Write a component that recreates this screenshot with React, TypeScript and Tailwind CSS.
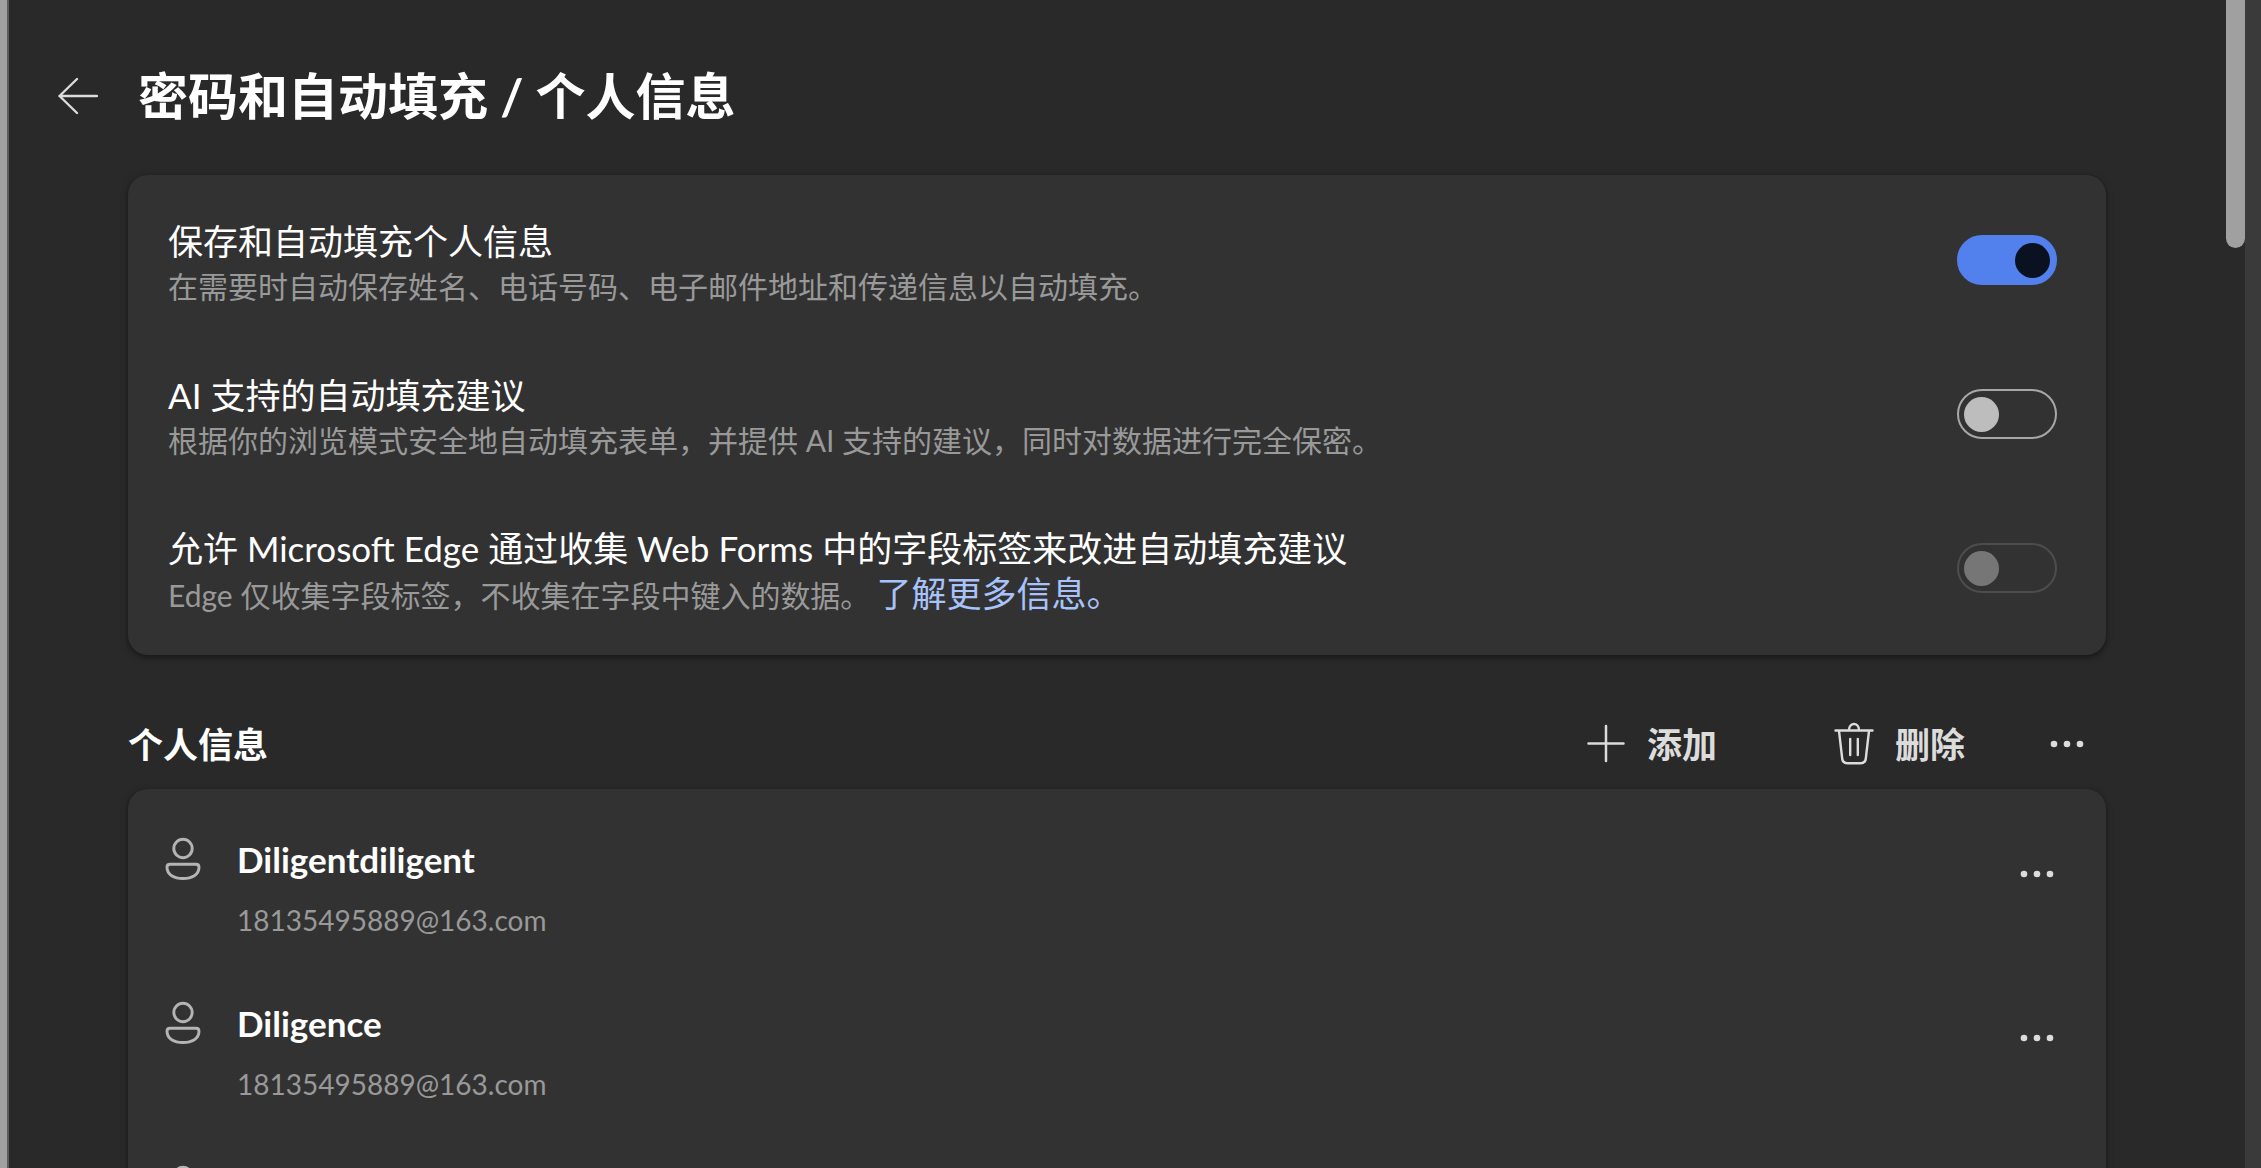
import React, { useState } from 'react';

interface Setting {
  id: string;
  title: string;
  description: string;
  link?: string;
  enabled: boolean;
  disabled?: boolean;
}

interface Profile {
  id: number;
  name: string;
  email: string;
}

const SETTINGS: Setting[] = [
  {
    id: 'save-info',
    title: '保存和自动填充个人信息',
    description: '在需要时自动保存姓名、电话号码、电子邮件地址和传递信息以自动填充。',
    enabled: true,
  },
  {
    id: 'ai-suggestions',
    title: 'AI 支持的自动填充建议',
    description: '根据你的浏览模式安全地自动填充表单，并提供 AI 支持的建议，同时对数据进行完全保密。',
    enabled: false,
  },
  {
    id: 'field-labels',
    title: '允许 Microsoft Edge 通过收集 Web Forms 中的字段标签来改进自动填充建议',
    description: 'Edge 仅收集字段标签，不收集在字段中键入的数据。',
    link: '了解更多信息。',
    enabled: false,
    disabled: true,
  },
];

const PROFILES: Profile[] = [
  { id: 1, name: 'Diligentdiligent', email: '18135495889@163.com' },
  { id: 2, name: 'Diligence', email: '18135495889@163.com' },
  { id: 3, name: '', email: '' },
];

const BackIcon = () => (
  <svg className="h-10 w-10" viewBox="0 0 40 40" fill="none" stroke="#dcdcdc" strokeWidth="2.4" strokeLinecap="round" strokeLinejoin="round">
    <path d="M39 20H1.5M19 3 1.5 20 19 37" />
  </svg>
);

const PlusIcon = () => (
  <svg className="h-10 w-10" viewBox="0 0 40 40" fill="none" stroke="#dcdcdc" strokeWidth="2.5" strokeLinecap="round">
    <path d="M20 2v35M2.500 19.500h35" />
  </svg>
);

const TrashIcon = () => (
  <svg className="h-11 w-10" viewBox="0 0 40 44" fill="none" stroke="#dcdcdc" strokeWidth="2.4" strokeLinecap="round" strokeLinejoin="round">
    <path d="M1.5 8.500h37M15 8c0-8 10-8 10 0M5 9l3.2 27.500q.6 4.800 5.400 4.800h12.800q4.800 0 5.400-4.800L35 9M16.200 17v16M23.800 17v16" />
  </svg>
);

const MoreIcon = () => (
  <svg className="h-10 w-10" viewBox="0 0 40 40" fill="#dcdcdc">
    <circle cx="7" cy="20" r="3.3" />
    <circle cx="20" cy="20" r="3.3" />
    <circle cx="33" cy="20" r="3.3" />
  </svg>
);

const PersonIcon = () => (
  <svg className="h-11 w-9" viewBox="0 0 36 44" fill="none" stroke="#b4b4b4" strokeWidth="2.9">
    <circle cx="18" cy="11.500" r="9.200" />
    <path d="M5 27.300h26q3 0 3 3c0 7.500-7 11.200-16 11.200S2 37.800 2 30.300q0-3 3-3Z" />
  </svg>
);

const Toggle: React.FC<{ setting: Setting; checked: boolean; onChange: (checked: boolean) => void }> = ({ setting, checked, onChange }) => {
  return (
    <input
      id={setting.id}
      type="checkbox"
      role="switch"
      checked={checked}
      disabled={setting.disabled}
      onChange={(e) => onChange(e.target.checked)}
      className="flex h-[50px] w-[100px] shrink-0 appearance-none items-center rounded-full border-2 border-[#a8a8a8] px-[5px] before:size-[35px] before:rounded-full before:bg-[#bdbdbd] checked:justify-end checked:border-[#5280ed] checked:bg-[#5280ed] checked:before:bg-[#0a1120] disabled:border-[#4d4d4d] disabled:before:bg-[#767676]"
    />
  );
};

const SettingRow: React.FC<{ setting: Setting }> = ({ setting }) => {
  const [checked, setChecked] = useState(setting.enabled);

  return (
    <div className="flex h-[154px] items-center justify-between">
      <div className="pt-2 leading-[45px]">
        <label htmlFor={setting.id} className="block text-[35px] text-white">{setting.title}</label>
        <p className="text-[30px] text-[#999999]">
          {setting.description}
          {setting.link && <a href="#" className="ml-1.5 text-[35px] leading-[45px] text-[#a8c3fb]">{setting.link}</a>}
        </p>
      </div>
      <Toggle setting={setting} checked={checked} onChange={setChecked} />
    </div>
  );
};

const ProfileRow: React.FC<{ profile: Profile }> = ({ profile }) => {
  return (
    <li className="flex h-[164px] items-start justify-between">
      <div className="flex gap-9">
        <PersonIcon />
        <div>
          <h3 className="text-[35px] leading-[45px] font-bold text-white">{profile.name}</h3>
          <p className="mt-4 text-[28px] leading-[45px] text-[#999999]">{profile.email}</p>
        </div>
      </div>
      <button type="button" aria-label="更多操作" className="mt-[17px]">
        <MoreIcon />
      </button>
    </li>
  );
};

export default function App() {
  return (
    <div className="flex h-screen overflow-hidden bg-[#292929] font-[Lato,'Noto_Sans_CJK_SC',sans-serif]">
      <div className="w-[9px] shrink-0 border-r-2 border-[#5c5c5c] bg-[#a0a0a0]" />

      <main className="min-w-0 flex-1 pr-[120px] pl-12">
        <header className="flex items-center gap-10 pt-[61px] pl-px">
          <button type="button" aria-label="返回">
            <BackIcon />
          </button>
          <h1 className="text-[50px] leading-[70px] font-bold text-white">密码和自动填充 / 个人信息</h1>
        </header>

        <div className="pl-[71px]">
          <section className="mt-11 rounded-[20px] bg-[#323232] pt-2 pr-[49px] pb-[10px] pl-10 shadow-[0_2px_6px_rgba(0,0,0,0.5)]">
            {SETTINGS.map((setting) => (
              <SettingRow key={setting.id} setting={setting} />
            ))}
          </section>

          <div className="mt-[59px] flex h-[60px] items-center justify-between">
            <h2 className="text-[35px] leading-[50px] font-bold text-white">个人信息</h2>
            <div className="flex items-center pr-[19px] text-[35px] leading-[50px] font-bold text-[#dcdcdc]">
              <button type="button" className="flex items-center gap-[21px]">
                <PlusIcon />
                添加
              </button>
              <button type="button" className="ml-[117px] flex items-center gap-[21px]">
                <TrashIcon />
                删除
              </button>
              <button type="button" aria-label="更多选项" className="ml-[82px]">
                <MoreIcon />
              </button>
            </div>
          </div>

          <ul className="mt-[15px] rounded-[20px] bg-[#323232] pt-12 pr-[49px] pl-[37px] shadow-[0_2px_6px_rgba(0,0,0,0.5)]">
            {PROFILES.map((profile) => (
              <ProfileRow key={profile.id} profile={profile} />
            ))}
          </ul>
        </div>
      </main>

      {/* scrollbar */}
      <div className="w-[19px] shrink-0">
        <div className="h-[248px] rounded-b-full bg-[#a0a0a0]" />
      </div>
      <div className="w-4 shrink-0 bg-[#3a3a3a]" />
    </div>
  );
}
